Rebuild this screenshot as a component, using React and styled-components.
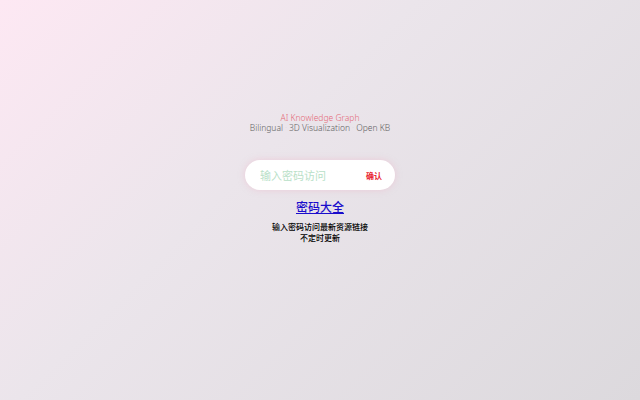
import React, { useState } from 'react';
import styled, { createGlobalStyle } from 'styled-components';

const GlobalStyle = createGlobalStyle`
  html, body {
    margin: 0;
    padding: 0;
    height: 100%;
  }
  body {
    font-family: "Noto Sans", "Noto Sans CJK SC", sans-serif;
  }
`;

const Page = styled.div`
  width: 100%;
  min-height: 100vh;
  box-sizing: border-box;
  background: linear-gradient(135deg, #fde8f3 0%, #ebe5eb 40%, #dcd9dd 100%);
  display: flex;
  flex-direction: column;
  align-items: center;
  padding-top: 113px;
`;

const Header = styled.div`
  display: flex;
  flex-direction: column;
  align-items: center;
  line-height: 10px;
  font-size: 8.5px;
  font-weight: 300;
`;

const Title = styled.div`
  color: #e46a78;
`;

const Subtitle = styled.div`
  color: #5e5e5e;
`;

const Dot = styled.span`
  color: #ddd5db;
  margin: 0 2px;
`;

const PasswordBox = styled.form`
  margin-top: 27px;
  width: 150px;
  height: 30px;
  box-sizing: border-box;
  border-radius: 15px;
  background: #fff;
  box-shadow: 0 0 6px rgba(240, 180, 200, 0.5);
  display: flex;
  align-items: center;
  padding: 0 13px 0 15px;
`;

const Input = styled.input`
  flex: 1;
  min-width: 0;
  border: none;
  outline: none;
  background: transparent;
  font-family: "Noto Sans CJK SC", sans-serif;
  font-size: 11px;
  color: #333;
  padding: 0;

  &::placeholder {
    color: #b9dfc8;
  }
`;

const Confirm = styled.button`
  border: none;
  background: transparent;
  padding: 0;
  color: #e8222e;
  font-family: "Noto Sans CJK SC", sans-serif;
  font-weight: 700;
  font-size: 8px;
  cursor: pointer;
`;

const Link = styled.a`
  margin-top: 9px;
  color: #1a0dcc;
  font-family: "Noto Sans CJK SC", sans-serif;
  font-size: 12px;
  line-height: 16px;
  font-weight: 500;
  text-decoration: underline;
`;

const Note = styled.div`
  margin-top: 6px;
  font-family: "Noto Sans CJK SC", sans-serif;
  font-size: 8px;
  line-height: 11px;
  font-weight: 500;
  color: #000;
  text-align: center;
`;

export default function App() {
  const [password, setPassword] = useState('');

  return (
    <>
      <GlobalStyle />
      <Page>
        <Header>
          <Title>AI Knowledge Graph</Title>
          <Subtitle>
            Bilingual<Dot>·</Dot>3D Visualization<Dot>·</Dot>Open KB
          </Subtitle>
        </Header>
        <PasswordBox onSubmit={(e) => e.preventDefault()}>
          <Input
            type="password"
            placeholder="输入密码访问"
            value={password}
            onChange={(e) => setPassword(e.target.value)}
          />
          <Confirm type="submit">确认</Confirm>
        </PasswordBox>
        <Link href="#">密码大全</Link>
        <Note>
          输入密码访问最新资源链接
          <br />
          不定时更新
        </Note>
      </Page>
    </>
  );
}
